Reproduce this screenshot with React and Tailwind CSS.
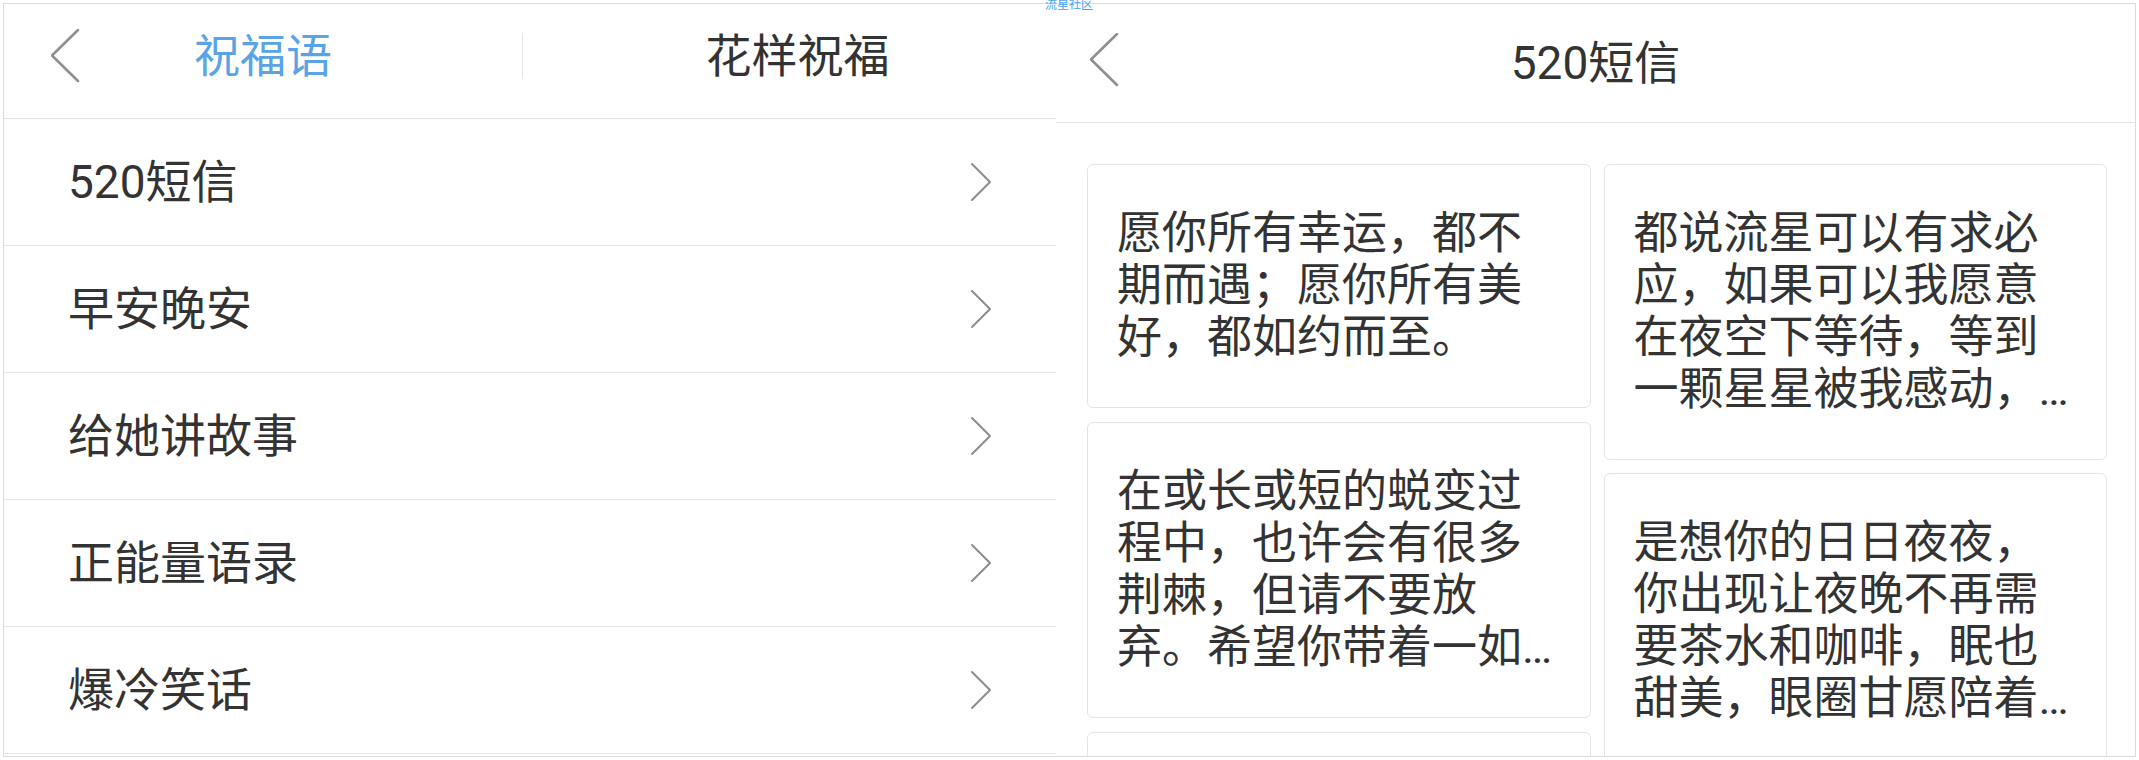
const CATEGORIES = ["520短信", "早安晚安", "给她讲故事", "正能量语录", "爆冷笑话"];

const LEFT_CARDS = [
  "愿你所有幸运，都不期而遇；愿你所有美好，都如约而至。",
  "在或长或短的蜕变过程中，也许会有很多荆棘，但请不要放弃。希望你带着一如既往的勇气，走向更好的自己。",
  "愿你被这个世界温柔以待，即使生命总以刻薄荒芜相欺。",
];

const RIGHT_CARDS = [
  "都说流星可以有求必应，如果可以我愿意在夜空下等待，等到一颗星星被我感动，为我实现心愿。",
  "是想你的日日夜夜，你出现让夜晚不再需要茶水和咖啡，眠也甜美，眼圈甘愿陪着你一起熬夜。",
];

const BackIcon = () => (
  <svg width="30" height="54" viewBox="0 0 30 54" fill="none">
    <path d="M27 1 L1 26.5 L27 52" stroke="#8e8e8e" strokeWidth="2.5" strokeLinecap="round" strokeLinejoin="round" />
  </svg>
);

const ChevronRight = () => (
  <svg width="22" height="40" viewBox="0 0 22 40" fill="none">
    <path d="M2 2 L20 20 L2 38" stroke="#8c8c8c" strokeWidth="2" strokeLinecap="round" strokeLinejoin="round" />
  </svg>
);

const Card = ({ text }) => (
  <div className="shrink-0 border border-[#e4e4e4] rounded-[6px] px-[29px] py-[43px] bg-white">
    <p className="text-[45px] leading-[52px] text-[#333] line-clamp-4">{text}</p>
  </div>
);

export default function App() {
  return (
    <div className="relative w-[2139px] h-[760px] bg-white overflow-hidden font-['Roboto','Noto_Sans_CJK_SC',sans-serif]">
      {/* watermark */}
      <span className="absolute left-[1045px] top-[-2px] text-[12px] leading-[14px] text-[#4ba2ea]">流星社区</span>

      <div className="ml-[3px] mt-[3px] w-[2133px] h-[754px] border border-[#dcdcdc] flex overflow-hidden">
        {/* Left screen: categories */}
        <div className="w-[1052px] shrink-0 flex flex-col">
          <header className="shrink-0 h-[115px] border-b border-[#e2e2e2] flex items-center pb-[10px]">
            <div className="w-[100px] pl-[47px] flex items-center">
              <BackIcon />
            </div>
            <div className="w-[318px] text-center text-[46px] leading-none text-[#5aa4e6]">祝福语</div>
            <div className="ml-[100px] w-px h-[46px] bg-[#e8e8e8]" />
            <div className="flex-1 pl-[16px] text-center text-[46px] leading-none text-[#333]">花样祝福</div>
          </header>

          <ul className="flex flex-col">
            {CATEGORIES.map((c) => (
              <li key={c} className="shrink-0 h-[127px] border-b border-[#e4e4e4] flex items-center justify-between px-[64px]">
                <span className="text-[46px] leading-none text-[#333]">{c}</span>
                <ChevronRight />
              </li>
            ))}
          </ul>
        </div>

        {/* Right screen: 520短信 */}
        <div className="flex-1 flex flex-col">
          <header className="shrink-0 h-[119px] border-b border-[#e2e2e2] flex items-center pb-[6px]">
            <div className="w-[120px] pl-[34px] flex items-center">
              <BackIcon />
            </div>
            <div className="flex-1 text-center text-[46px] leading-none text-[#333] pt-[6px]">520短信</div>
            <div className="w-[120px]" />
          </header>

          <div className="shrink-0 flex items-start gap-[13px] pl-[31px] pr-[28px] pt-[41px]">
            <div className="flex-1 flex flex-col gap-[14px]">
              {LEFT_CARDS.map((t) => (
                <Card key={t} text={t} />
              ))}
            </div>
            <div className="flex-1 flex flex-col gap-[13px]">
              {RIGHT_CARDS.map((t) => (
                <Card key={t} text={t} />
              ))}
            </div>
          </div>
        </div>
      </div>
    </div>
  );
}
